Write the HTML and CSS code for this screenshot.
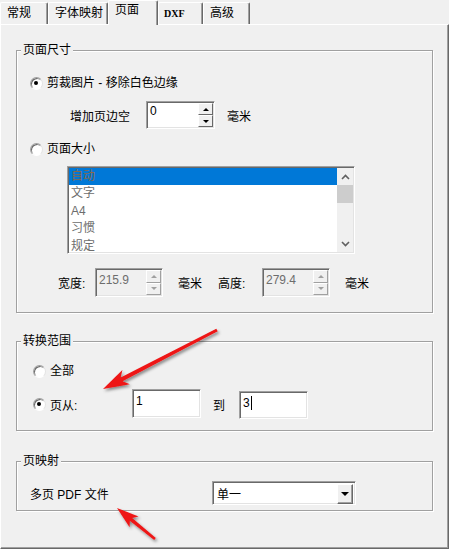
FILE: index.html
```html
<!DOCTYPE html>
<html lang="zh">
<head>
<meta charset="utf-8">
<title>页面</title>
<link rel="stylesheet" href="styles.css">
</head>
<body>
<div class="dialog">
  <div class="tabs">
    <div class="tab w1">常规</div>
    <div class="tab w2">字体映射</div>
    <div class="tab active w3">页面</div>
    <div class="tab latin w4">DXF</div>
    <div class="tab w5">高级</div>
  </div>
  <div class="panel">
    <div class="group g1">
      <div class="group-title">页面尺寸</div>
      <div class="radio-row r1"><span class="radio checked"></span><span>剪裁图片 - 移除白色边缘</span></div>
      <div class="row spin-row">
        <span class="margin-lbl">增加页边空</span>
        <div class="spin sunken">
          <div class="spin-input">0</div>
          <div class="spin-btns"><span class="sb up"></span><span class="sb down"></span></div>
        </div>
        <span class="unit u-margin">毫米</span>
      </div>
      <div class="radio-row r2"><span class="radio"></span><span>页面大小</span></div>
      <div class="listbox sunken">
        <ul class="items">
          <li class="sel">自动</li>
          <li>文字</li>
          <li>A4</li>
          <li>习惯</li>
          <li>规定</li>
        </ul>
        <div class="vscroll">
          <span class="sarrow"><svg width="9" height="6" viewBox="0 0 9 6"><polyline points="1,5 4.5,1.5 8,5" fill="none" stroke="#606060" stroke-width="1.6"/></svg></span>
          <span class="thumb"></span>
          <span class="sfill"></span>
          <span class="sarrow"><svg width="9" height="6" viewBox="0 0 9 6"><polyline points="1,1 4.5,4.5 8,1" fill="none" stroke="#606060" stroke-width="1.6"/></svg></span>
        </div>
      </div>
      <div class="row size-row">
        <span class="w-lbl">宽度:</span>
        <div class="spin sunken disabled dsize">
          <div class="spin-input">215.9</div>
          <div class="spin-btns"><span class="sb up"></span><span class="sb down"></span></div>
        </div>
        <span class="unit u-w">毫米</span>
        <span class="h-lbl">高度:</span>
        <div class="spin sunken disabled dsize">
          <div class="spin-input">279.4</div>
          <div class="spin-btns"><span class="sb up"></span><span class="sb down"></span></div>
        </div>
        <span class="unit u-h">毫米</span>
      </div>
    </div>

    <div class="group g2">
      <div class="group-title">转换范围</div>
      <div class="radio-row r3"><span class="radio"></span><span>全部</span></div>
      <div class="row from-row">
        <span class="radio checked"></span>
        <span class="from-lbl">页从:</span>
        <div class="textbox sunken tb1">1</div>
        <span class="to-lbl">到</span>
        <div class="textbox sunken tb2">3<span class="caret"></span></div>
      </div>
    </div>

    <div class="group g3">
      <div class="group-title">页映射</div>
      <div class="row map-row">
        <span class="map-lbl">多页 PDF 文件</span>
        <div class="combo sunken">
          <span class="combo-text">单一</span>
          <span class="combo-btn"></span>
        </div>
      </div>
    </div>
  </div>

  <svg class="annot" width="449" height="549" viewBox="0 0 449 549">
    <defs>
      <filter id="sh" x="-20%" y="-20%" width="140%" height="140%">
        <feDropShadow dx="1.5" dy="2" stdDeviation="1.4" flood-color="#000" flood-opacity="0.45"/>
      </filter>
    </defs>
    <polygon filter="url(#sh)" fill="#ee1414"
      points="103,389 129.8,384.2 122.5,381.2 217.7,331.3 216.3,328.7 120.7,377.6 122.4,370"/>
    <polygon filter="url(#sh)" fill="#ee1414"
      points="117,508 138.5,516.5 132.1,518 155.8,538 154.2,540 129.8,520.8 129.6,527.3"/>
  </svg>
</div>
</body>
</html>
```

FILE: styles.css
```css
html, body {
  margin: 0;
  padding: 0;
  background: #f0f0f0;
}

body {
  font-family: "Liberation Sans", "Noto Sans CJK SC", sans-serif;
  font-size: 12px;
  color: #000;
}

.dialog {
  position: relative;
  width: 449px;
  height: 549px;
  overflow: hidden;
  background: #f0f0f0;
}

/* ---------- tabs ---------- */
.tabs {
  display: flex;
  align-items: flex-end;
  height: 24px;
}

.tab {
  box-sizing: border-box;
  height: 22px;
  padding: 1px 0 0 6px;
  line-height: 19px;
  border-top: 1px solid #fff;
  border-left: 1px solid #fff;
  border-right: 1px solid #696969;
  box-shadow: inset -1px 0 0 #a0a0a0;
  border-radius: 2px 2px 0 0;
  background: #f0f0f0;
  white-space: nowrap;
}

.tab.active {
  height: 25px;
  margin-bottom: -1px;
  position: relative;
  z-index: 2;
  padding-top: 0;
}

.tab.latin {
  font-family: "Liberation Serif", serif;
  font-weight: bold;
  font-size: 10px;
  padding-left: 5px;
}

.w1 { width: 48px; }
.w2 { width: 60px; }
.w3 { width: 50px; }
.w4 { width: 45px; }
.w5 { width: 47px; }

/* ---------- panel ---------- */
.panel {
  box-sizing: border-box;
  height: 525px;
  border-top: 1px solid #fff;
  border-left: 1px solid #fff;
  border-right: 1px solid #696969;
  border-bottom: 1px solid #696969;
  box-shadow: inset -1px -1px 0 #a0a0a0;
  padding-left: 15px;
}

/* ---------- group boxes ---------- */
.group {
  position: relative;
  box-sizing: border-box;
  width: 417px;
  border: 1px solid #a0a0a0;
  box-shadow: 1px 1px 0 #fff, inset 1px 1px 0 #fff;
}

.group-title {
  position: absolute;
  top: -8px;
  left: 4px;
  padding: 0 2px;
  line-height: 14px;
  background: #f0f0f0;
}

.g1 { margin-top: 25px; padding-bottom: 15px; }
.g2 { margin-top: 28px; padding-bottom: 11px; }
.g3 { margin-top: 30px; padding-bottom: 5px; }

.row {
  display: flex;
  align-items: center;
}

/* ---------- radio ---------- */
.radio-row {
  display: flex;
  align-items: center;
  gap: 4px;
  height: 16px;
  line-height: 16px;
}

.radio {
  position: relative;
  flex: none;
  box-sizing: border-box;
  width: 13px;
  height: 13px;
  border-radius: 50%;
  background: #fff;
  border: 1px solid;
  border-color: #a0a0a0 #e3e3e3 #fff #a0a0a0;
  box-shadow: inset 1px 1px 0 #696969;
}

.radio.checked::after {
  content: "";
  position: absolute;
  left: 3px;
  top: 3px;
  width: 4px;
  height: 4px;
  border-radius: 50%;
  background: #000;
}

.r1 { margin-top: 24px; padding-left: 13px; }
.r2 { margin-top: 12px; padding-left: 13px; }
.r3 { margin-top: 21px; padding-left: 16px; }

/* ---------- sunken field ---------- */
.sunken {
  box-sizing: border-box;
  border: 1px solid;
  border-color: #a0a0a0 #fff #fff #a0a0a0;
  box-shadow: inset 1px 1px 0 #696969, inset -1px -1px 0 #e3e3e3;
  background: #fff;
}

/* ---------- spin box ---------- */
.spin {
  display: flex;
  width: 69px;
  height: 28px;
  padding: 1px;
}

.spin-input {
  flex: 1;
  padding: 1px 0 0 2px;
  line-height: 14px;
}

.spin-btns {
  display: flex;
  flex-direction: column;
  width: 15px;
}

.sb {
  flex: 1;
  display: flex;
  align-items: center;
  justify-content: center;
  box-sizing: border-box;
  background: #f0f0f0;
  border: 1px solid;
  border-color: #fff #696969 #696969 #fff;
}

.sb.up::after {
  content: "";
  border-left: 3px solid transparent;
  border-right: 3px solid transparent;
  border-bottom: 3px solid #000;
}

.sb.down::after {
  content: "";
  border-left: 3px solid transparent;
  border-right: 3px solid transparent;
  border-top: 3px solid #000;
}

.spin.disabled {
  background: #f0f0f0;
  color: #6d6d6d;
}

.spin.disabled .sb {
  border-color: #fff #a0a0a0 #a0a0a0 #fff;
}

.spin.disabled .sb.up::after { border-bottom-color: #a0a0a0; }
.spin.disabled .sb.down::after { border-top-color: #a0a0a0; }

.dsize { width: 68px; height: 29px; }
.dsize .spin-input { padding-top: 3px; }

.spin-row {
  margin-top: 10px;
  height: 28px;
}

.margin-lbl {
  margin-left: 53px;
  width: 76px;
}

.u-margin { margin-left: 12px; }

/* ---------- list box ---------- */
.listbox {
  display: flex;
  margin: 9px 0 0 50px;
  width: 288px;
  height: 88px;
  padding: 1px 1px 1px 1px;
}

.items {
  flex: 1;
  list-style: none;
  margin: 0;
  padding: 0;
  color: #6d6d6d;
}

.items li {
  height: 17.4px;
  line-height: 17.4px;
  padding-left: 2px;
}

.items li.sel {
  background: #0078d7;
  color: #86694c;
}

.vscroll {
  display: flex;
  flex-direction: column;
  width: 16px;
  background: #f0f0f0;
}

.sarrow {
  display: flex;
  align-items: center;
  justify-content: center;
  height: 17px;
}

.thumb {
  height: 18px;
  margin: 0 0 0 0;
  background: #cdcdcd;
}

.sfill { flex: 1; }

/* ---------- size row ---------- */
.size-row {
  margin-top: 14px;
  height: 29px;
}

.w-lbl { margin-left: 41px; width: 37px; }
.u-w { margin-left: 15px; width: 24px; }
.h-lbl { margin-left: 16px; width: 44px; }
.u-h { margin-left: 15px; }

/* ---------- conversion range ---------- */
.from-row {
  margin-top: 10px;
  height: 30px;
  padding-left: 16px;
}

.from-lbl {
  margin-left: 4px;
  width: 82px;
}

.textbox {
  width: 69px;
  padding: 4px 0 0 3px;
  line-height: 14px;
}

.tb1 { height: 29px; align-self: flex-start; }
.tb2 { height: 28px; align-self: flex-end; }

.caret {
  display: inline-block;
  width: 1px;
  height: 14px;
  margin-left: 1px;
  vertical-align: top;
  background: #000;
}

.to-lbl {
  margin-left: 12px;
  width: 12px;
}

.tb2 { margin-left: 14px; }

/* ---------- page mapping ---------- */
.map-row {
  margin-top: 19px;
  height: 24px;
}

.map-lbl {
  margin-left: 13px;
  width: 182px;
}

.combo {
  display: flex;
  align-items: center;
  width: 144px;
  height: 24px;
  padding: 2px 2px 1px 2px;
}

.combo-text {
  flex: 1;
  padding-left: 2px;
}

.combo-btn {
  display: flex;
  align-items: center;
  justify-content: center;
  box-sizing: border-box;
  width: 16px;
  height: 20px;
  background: #f0f0f0;
  border: 1px solid;
  border-color: #fff #696969 #696969 #fff;
  box-shadow: inset -1px -1px 0 #a0a0a0;
}

.combo-btn::after {
  content: "";
  border-left: 4px solid transparent;
  border-right: 4px solid transparent;
  border-top: 4px solid #000;
}

/* ---------- annotation arrows ---------- */
.annot {
  position: absolute;
  left: 0;
  top: 0;
  pointer-events: none;
}
```
